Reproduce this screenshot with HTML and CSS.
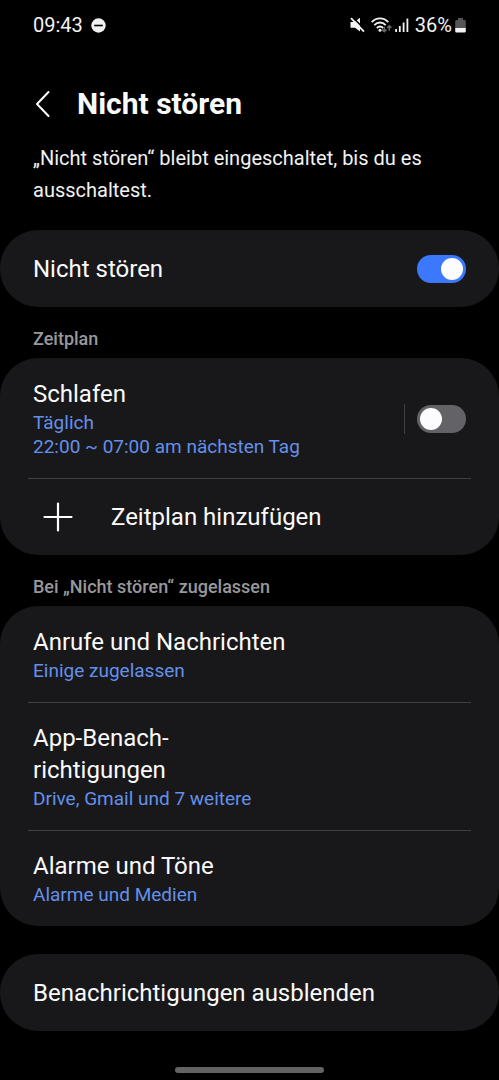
FILE: index.html
```html
<!DOCTYPE html>
<html lang="de">
<head>
<meta charset="UTF-8">
<meta name="viewport" content="width=device-width, initial-scale=1.0">
<link rel="stylesheet" href="styles.css">
<title>Nicht stören</title>
</head>
<body>
<div class="screen">
  <div class="status-bar">
    <div class="status-left">
      <span>09:43</span>
      <svg width="15" height="15" viewBox="0 0 15 15" aria-hidden="true">
        <circle cx="7.5" cy="7.5" r="7.2" fill="#f2f2f2"/>
        <path d="M3.2 7.5h8.600" stroke="#000" stroke-width="1.6"/>
      </svg>
    </div>
    <div class="status-right">
      <svg width="15" height="16" viewBox="0 0 15 16" aria-hidden="true">
        <path d="M0.500 5h4L10 0.800v13.700L5 10.800H0.500z" fill="#f2f2f2"/>
        <path d="M2.800 0.400L15 12.600" stroke="#000" stroke-width="1.500"/>
        <path d="M1 1.200L14 14.600" stroke="#f2f2f2" stroke-width="1.800"/>
      </svg>
      <svg class="icon-wifi" width="21" height="16" viewBox="0 0 21 16" aria-hidden="true">
        <g fill="none" stroke="#f2f2f2" stroke-width="1.8">
          <path d="M0.7 5.2C5.6 0.200 12.4 0.200 17.3 5.2"/>
          <path d="M3.3 8.200C6.8 4.600 11.2 4.600 14.7 8.200"/>
          <path d="M5.8 11C7.8 9.100 10.2 9.100 12.2 11"/>
        </g>
        <circle cx="9" cy="13.200" r="1.5" fill="#f2f2f2"/>
        <g fill="none" stroke="#6a6a6a" stroke-width="1.5">
          <path d="M13.3 9.8v5M11.2 12.6l2.1 2.1 2.1-2.1"/>
          <path d="M18.300 13.800v-5M16.200 10.900l2.100-2.100 2.100 2.100"/>
        </g>
      </svg>
      <svg class="icon-signal" width="14" height="16" viewBox="0 0 14 16" aria-hidden="true">
        <path d="M1.1 12v3M4.8 9v6M8.6 5.5V15M12.4 1.5V15" stroke="#f2f2f2" stroke-width="1.8"/>
      </svg>
      <span>36%</span>
      <svg class="icon-battery" width="11" height="15" viewBox="0 0 11 15" aria-hidden="true">
        <path d="M3 0h5v2h1.5a1.3 1.3 0 0 1 1.3 1.3V10H.2V3.3A1.3 1.3 0 0 1 1.5 2H3z" fill="#555"/>
        <path d="M.2 10h10.6v3.2a1.3 1.3 0 0 1-1.3 1.3h-8a1.3 1.3 0 0 1-1.3-1.3z" fill="#f2f2f2"/>
      </svg>
    </div>
  </div>

  <header class="header">
    <button class="back" type="button" aria-label="Zurück">
      <svg width="16" height="28" viewBox="0 0 16 28" aria-hidden="true">
        <path d="M13.500 2L2 14 13.500 26" fill="none" stroke="#fff" stroke-width="2" stroke-linecap="round" stroke-linejoin="round"/>
      </svg>
    </button>
    <h1>Nicht stören</h1>
  </header>

  <main>
    <p class="description">„Nicht stören“ bleibt eingeschaltet, bis du es ausschaltest.</p>

    <div class="card">
      <div class="row">
        <label class="title" for="dnd">Nicht stören</label>
        <input class="switch" type="checkbox" id="dnd" checked>
      </div>
    </div>

    <h2>Zeitplan</h2>
    <div class="card">
      <div class="row row-detail">
        <label class="text" for="sleep">
          <span class="title">Schlafen</span>
          <span class="sub">Täglich</span>
          <span class="sub">22:00 ~ 07:00 am nächsten Tag</span>
        </label>
        <span class="separator"></span>
        <input class="switch" type="checkbox" id="sleep">
      </div>
      <button class="row row-add" type="button">
        <svg width="30" height="30" viewBox="0 0 30 30" aria-hidden="true">
          <path d="M15 1.500v27M1.500 15h27" stroke="#fff" stroke-width="2.2" stroke-linecap="round"/>
        </svg>
        <span class="title">Zeitplan hinzufügen</span>
      </button>
    </div>

    <h2>Bei „Nicht stören“ zugelassen</h2>
    <div class="card">
      <button class="row row-detail" type="button">
        <span class="text">
          <span class="title">Anrufe und Nachrichten</span>
          <span class="sub">Einige zugelassen</span>
        </span>
      </button>
      <button class="row row-detail" type="button">
        <span class="text">
          <span class="title">App-Benach-<br>richtigungen</span>
          <span class="sub">Drive, Gmail und 7 weitere</span>
        </span>
      </button>
      <button class="row row-detail" type="button">
        <span class="text">
          <span class="title">Alarme und Töne</span>
          <span class="sub">Alarme und Medien</span>
        </span>
      </button>
    </div>

    <div class="card card-last">
      <button class="row" type="button">
        <span class="title">Benachrichtigungen ausblenden</span>
      </button>
    </div>
  </main>

  <div class="nav-handle"></div>
</div>
</body>
</html>
```

FILE: styles.css
```css
* {
  box-sizing: border-box;
}
body {
  margin: 0;
  background-color: #000000;
  color: #fafafa;
  font-family: Roboto, sans-serif;
}
h1, h2, p {
  margin: 0;
}
button {
  margin: 0;
  padding: 0;
  border: none;
  background: none;
  color: inherit;
  font-family: inherit;
  text-align: left;
  cursor: pointer;
}
svg {
  display: block;
  flex: none;
}
.screen {
  display: flex;
  flex-direction: column;
  min-height: 100vh;
}
.status-bar {
  display: flex;
  justify-content: space-between;
  align-items: center;
  height: 50px;
  padding: 0 33px;
  font-size: 20px;
  color: #f2f2f2;
}
.status-left {
  display: flex;
  align-items: center;
  gap: 8px;
}
.status-right {
  display: flex;
  align-items: center;
}
.icon-wifi {
  margin: 0 3px 0 6px;
}
.icon-signal {
  margin-right: 6px;
}
.icon-battery {
  margin-left: 3px;
}
.header {
  display: flex;
  align-items: center;
  gap: 26px;
  margin-top: 30px;
  padding: 0 33px;
}
.back {
  padding: 10px 0 10px 2px;
}
h1 {
  font-size: 30px;
  line-height: 48px;
  font-weight: 700;
}
.description {
  padding: 14px 66px 24px 33px;
  font-size: 20px;
  line-height: 32px;
  color: #f2f2f2;
}
h2 {
  padding: 20px 33px 7px;
  font-size: 18px;
  line-height: 24px;
  font-weight: 500;
  color: #98989b;
}
.card {
  display: flex;
  flex-direction: column;
  padding: 0 28px;
  border-radius: 38px;
  background-color: #18181a;
}
.card-last {
  margin-top: 28px;
}
.row {
  display: flex;
  align-items: center;
  justify-content: space-between;
  min-height: 77px;
  padding: 0 5px;
}
.row-detail {
  padding: 20px 5px 19px;
}
.row + .row {
  border-top: 1px solid #414143;
}
.row-detail + .row-detail {
  padding-top: 19px;
}
.row-add {
  justify-content: flex-start;
  gap: 38px;
  padding-left: 15px;
}
.text {
  display: flex;
  flex-direction: column;
  flex: 1;
}
.title {
  font-size: 24px;
  line-height: 32px;
}
.text .title {
  margin-bottom: 1px;
}
.sub {
  font-size: 19px;
  line-height: 24px;
  color: #6490ea;
}
.separator {
  width: 1px;
  height: 30px;
  margin-right: 12px;
  background-color: #414143;
}
.switch {
  appearance: none;
  flex: none;
  width: 49px;
  height: 28px;
  margin: 0;
  padding: 3px;
  border-radius: 14px;
  background-color: #636367;
  cursor: pointer;
}
.switch::before {
  content: "";
  display: block;
  width: 22px;
  height: 22px;
  border-radius: 50%;
  background-color: #fcfcff;
}
.switch:checked {
  background-color: #3b78fb;
}
.switch:checked::before {
  margin-left: auto;
}
.nav-handle {
  width: 30%;
  height: 6px;
  margin: auto auto 7px;
  border-radius: 3px;
  background-color: #636363;
}
```
